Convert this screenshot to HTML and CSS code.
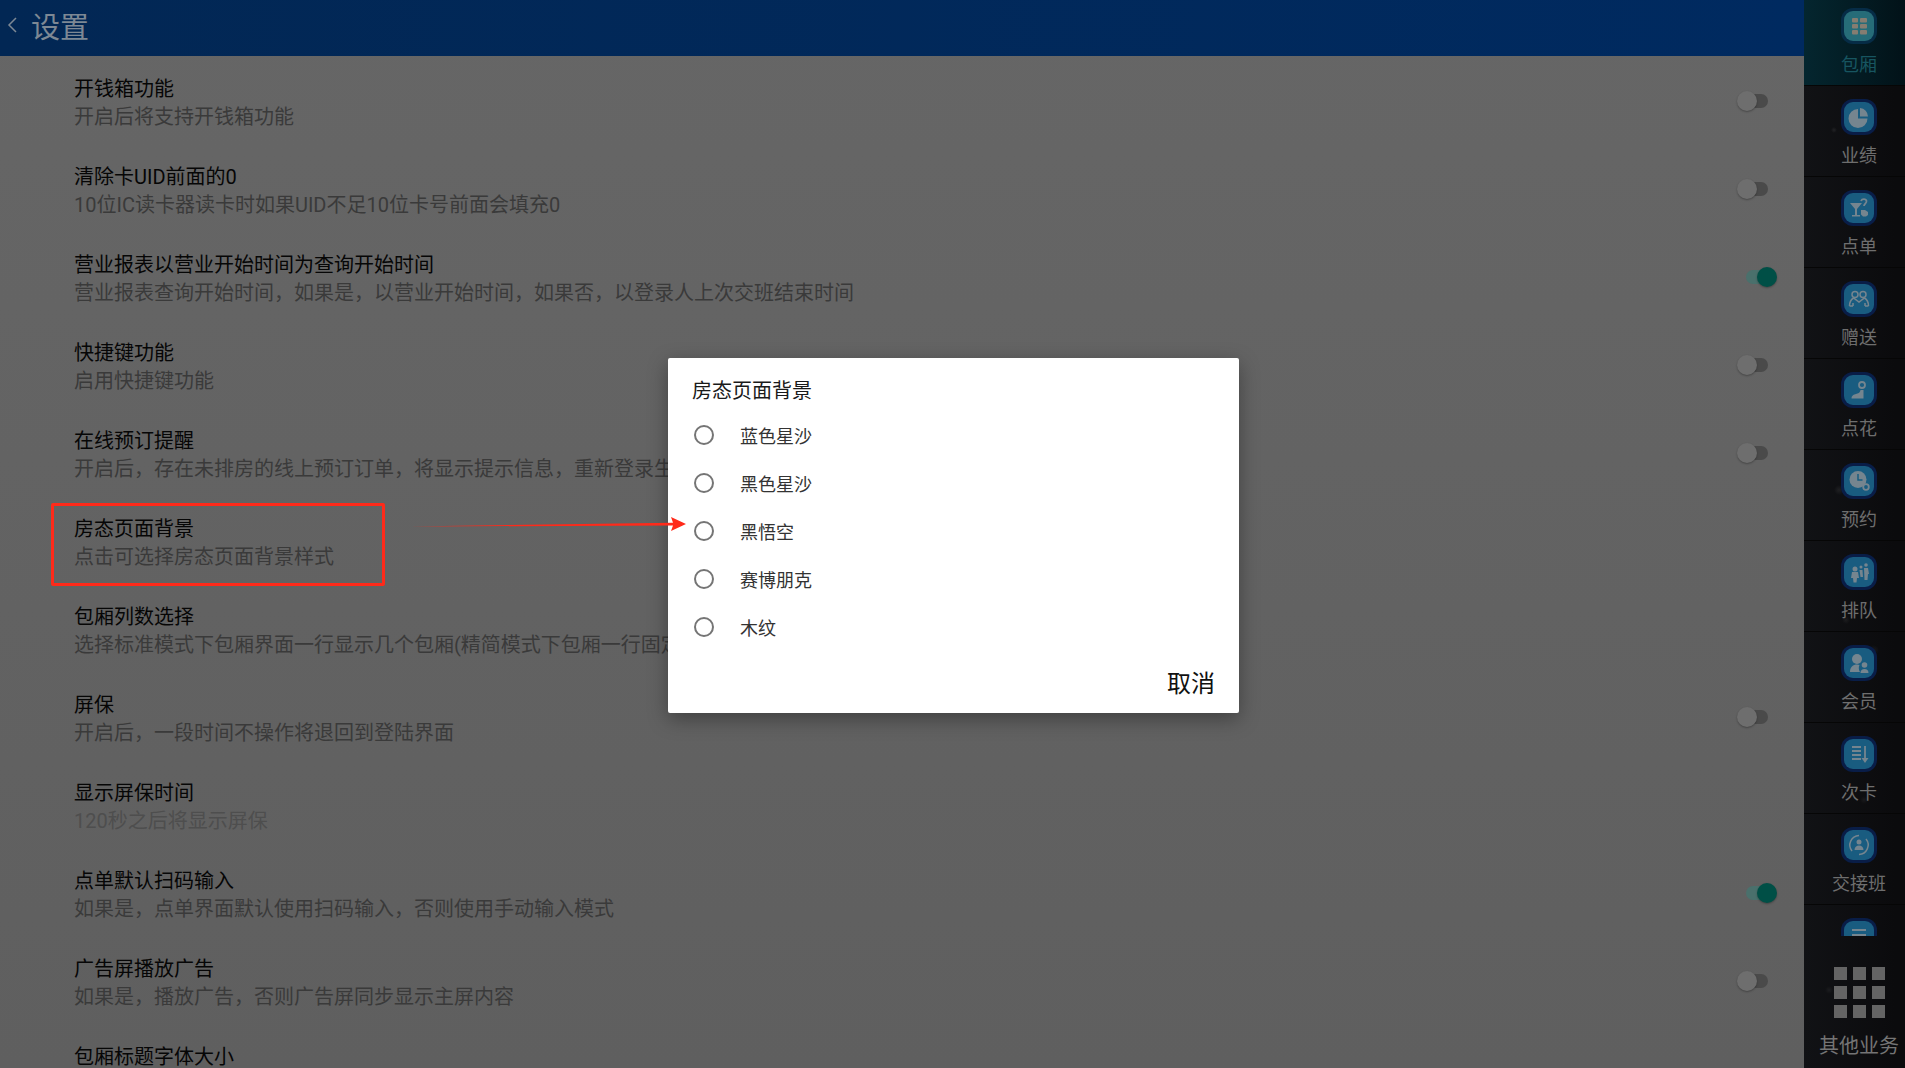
FILE: index.html
```html
<!DOCTYPE html>
<html lang="zh-CN">
<head>
    <meta charset="UTF-8">
    <title>设置</title>
    <link rel="stylesheet" href="styles.css">
</head>
<body>
    <div class="app">
        <main class="settings">
            <header class="header">
                <svg class="back-icon" viewBox="0 0 10 16"><path d="M9 1L2 8l7 7"/></svg>
                <div class="header-title">设置</div>
            </header>
            <div class="setting-list">
                <div class="setting-row">
                    <div class="setting-text">
                        <div class="setting-title">开钱箱功能</div>
                        <div class="setting-desc">开启后将支持开钱箱功能</div>
                    </div>
                    <div class="switch"></div>
                </div>
                <div class="setting-row">
                    <div class="setting-text">
                        <div class="setting-title">清除卡UID前面的0</div>
                        <div class="setting-desc">10位IC读卡器读卡时如果UID不足10位卡号前面会填充0</div>
                    </div>
                    <div class="switch"></div>
                </div>
                <div class="setting-row">
                    <div class="setting-text">
                        <div class="setting-title">营业报表以营业开始时间为查询开始时间</div>
                        <div class="setting-desc">营业报表查询开始时间，如果是，以营业开始时间，如果否，以登录人上次交班结束时间</div>
                    </div>
                    <div class="switch on"></div>
                </div>
                <div class="setting-row">
                    <div class="setting-text">
                        <div class="setting-title">快捷键功能</div>
                        <div class="setting-desc">启用快捷键功能</div>
                    </div>
                    <div class="switch"></div>
                </div>
                <div class="setting-row">
                    <div class="setting-text">
                        <div class="setting-title">在线预订提醒</div>
                        <div class="setting-desc">开启后，存在未排房的线上预订订单，将显示提示信息，重新登录生效</div>
                    </div>
                    <div class="switch"></div>
                </div>
                <div class="setting-row">
                    <div class="setting-text">
                        <div class="setting-title">房态页面背景</div>
                        <div class="setting-desc">点击可选择房态页面背景样式</div>
                    </div>
                </div>
                <div class="setting-row">
                    <div class="setting-text">
                        <div class="setting-title">包厢列数选择</div>
                        <div class="setting-desc">选择标准模式下包厢界面一行显示几个包厢(精简模式下包厢一行固定显示)</div>
                    </div>
                </div>
                <div class="setting-row">
                    <div class="setting-text">
                        <div class="setting-title">屏保</div>
                        <div class="setting-desc">开启后，一段时间不操作将退回到登陆界面</div>
                    </div>
                    <div class="switch"></div>
                </div>
                <div class="setting-row">
                    <div class="setting-text">
                        <div class="setting-title">显示屏保时间</div>
                        <div class="setting-desc disabled">120秒之后将显示屏保</div>
                    </div>
                </div>
                <div class="setting-row">
                    <div class="setting-text">
                        <div class="setting-title">点单默认扫码输入</div>
                        <div class="setting-desc">如果是，点单界面默认使用扫码输入，否则使用手动输入模式</div>
                    </div>
                    <div class="switch on"></div>
                </div>
                <div class="setting-row">
                    <div class="setting-text">
                        <div class="setting-title">广告屏播放广告</div>
                        <div class="setting-desc">如果是，播放广告，否则广告屏同步显示主屏内容</div>
                    </div>
                    <div class="switch"></div>
                </div>
                <div class="setting-row">
                    <div class="setting-text">
                        <div class="setting-title">包厢标题字体大小</div>
                    </div>
                </div>
            </div>
        </main>

        <nav class="sidebar">
            <div class="nav-scroll">
                <div class="nav-list">
                    <a href="#" class="nav-item active">
                        <span class="nav-icon">
                            <svg viewBox="0 0 30 30"><g class="tan"><rect x="8" y="7" width="6" height="4.500" rx="1"/><rect x="16" y="7" width="7" height="4.500" rx="1"/><rect x="8" y="13" width="6" height="4.500" rx="1"/><rect x="16" y="13" width="7" height="4.500" rx="1"/><rect x="8" y="19" width="6" height="4.500" rx="1"/><rect x="16" y="19" width="7" height="4.500" rx="1"/></g></svg>
                        </span>
                        包厢
                    </a>
                    <a href="#" class="nav-item">
                        <span class="nav-icon">
                            <svg viewBox="0 0 30 30"><g class="solid"><path d="M14 7v9.500h9.500A9.500 9.500 0 1 1 14 7z"/><path d="M16 6a8.500 8.500 0 0 1 8 8.500h-8z"/></g></svg>
                        </span>
                        业绩
                    </a>
                    <a href="#" class="nav-item">
                        <span class="nav-icon">
                            <svg viewBox="0 0 30 30"><path class="solid" d="M6 10h12l-5 6v6h3v1.500H8V22h3v-6z"/><path class="line" d="M17 8c1-2.500 5-2.500 5.500 0 .4 2-2.500 3-2.500 5"/><path class="solid" d="M17 17h4l3 2v3l-2 1.500h-3l-2-2z"/></svg>
                        </span>
                        点单
                    </a>
                    <a href="#" class="nav-item">
                        <span class="nav-icon">
                            <svg viewBox="0 0 30 30"><g class="line thin"><circle cx="11" cy="10.500" r="3"/><circle cx="19" cy="10.500" r="3"/><path d="M5.500 22c0-3 1.500-6.500 4-8l5.500 4 5.500-4c2.500 1.500 4 5 4 8"/><path d="M9 19v3M21 19v3M5.500 22H9M21 22h3.500"/></g></svg>
                        </span>
                        赠送
                    </a>
                    <a href="#" class="nav-item">
                        <span class="nav-icon">
                            <svg viewBox="0 0 30 30"><circle class="line" cx="18" cy="10" r="3"/><path class="solid" d="M16.500 15h3v8.500H7.500c0-3 2.500-4 4.500-4.500s4-1 4.500-4z"/></svg>
                        </span>
                        点花
                    </a>
                    <a href="#" class="nav-item">
                        <span class="nav-icon">
                            <svg viewBox="0 0 30 30"><circle class="solid" cx="14" cy="13.500" r="8.500"/><path class="cut" d="M14 8v6h4.500"/><circle class="line" cx="22" cy="21" r="2.800"/></svg>
                        </span>
                        预约
                    </a>
                    <a href="#" class="nav-item">
                        <span class="nav-icon">
                            <svg viewBox="0 0 30 30"><g class="solid"><circle cx="11" cy="12" r="2.500"/><path d="M8 15h6l1 6h-2l-.5 4.500h-3L9 21H7z"/><circle cx="17" cy="10" r="1.500"/><circle cx="22" cy="8" r="1.800"/><path d="M15.500 13h3l.5 7h-2.500zM20 11h4l1 6h-1l-.5 6h-3z"/></g></svg>
                        </span>
                        排队
                    </a>
                    <a href="#" class="nav-item">
                        <span class="nav-icon">
                            <svg viewBox="0 0 30 30"><g class="solid"><circle cx="13" cy="11" r="5"/><path d="M6 24c0-5 3-7.500 7-7.500 1 0 2 .2 2.500.5-1 1.500-1 5 .5 7z"/><circle cx="20.500" cy="17" r="2.800"/><path d="M16.500 25c0-2.500 1.500-4 4-4s4 1.500 4 4z"/></g></svg>
                        </span>
                        会员
                    </a>
                    <a href="#" class="nav-item">
                        <span class="nav-icon">
                            <svg viewBox="0 0 30 30"><g class="line"><path d="M8 8h9M8 12h9M8 16h9M8 20h9M21 7v15"/></g><path class="solid" d="M17.500 19h7L21 24z"/></svg>
                        </span>
                        次卡
                    </a>
                    <a href="#" class="nav-item">
                        <span class="nav-icon">
                            <svg viewBox="0 0 30 30"><g class="line thin"><path d="M8 21a9.500 9.500 0 0 1 7-15.500"/><path d="M22 9a9.500 9.500 0 0 1-7 15.500"/></g><g class="solid"><circle cx="15" cy="12" r="2.500"/><path d="M10.500 20c0-3 2-4.500 4.500-4.500s4.500 1.500 4.500 4.500z"/></g></svg>
                        </span>
                        交接班
                    </a>
                    <a href="#" class="nav-item">
                        <span class="nav-icon">
                            <svg viewBox="0 0 30 30"><g class="line"><path d="M8 9h14M8 14h14M8 19h14"/></g></svg>
                        </span>
                    </a>
                </div>
            </div>
            <a href="#" class="nav-other">
                <span class="other-grid">
                    <i></i><i></i><i></i><i></i><i></i><i></i><i></i><i></i><i></i>
                </span>
                其他业务
            </a>
        </nav>

        <div class="dialog-layer">
            <div class="dialog">
                <div class="dialog-title">房态页面背景</div>
                <ul class="option-list">
                    <li class="option"><span class="radio"></span>蓝色星沙</li>
                    <li class="option"><span class="radio"></span>黑色星沙</li>
                    <li class="option"><span class="radio"></span>黑悟空</li>
                    <li class="option"><span class="radio"></span>赛博朋克</li>
                    <li class="option"><span class="radio"></span>木纹</li>
                </ul>
                <div class="dialog-actions">
                    <button class="cancel-btn">取消</button>
                </div>
            </div>
        </div>

        <!-- red marks drawn over the screenshot -->
        <div class="mark-box"></div>
        <svg class="mark-arrow" viewBox="0 0 276 14"><path d="M0 9.500L263 5.800 261 0l15 7-15 7 2-5.500z"/></svg>
    </div>
</body>
</html>
```

FILE: styles.css
```css
* {
    margin: 0;
    padding: 0;
    box-sizing: border-box;
}

body {
    font-family: Roboto, "Noto Sans CJK SC", sans-serif;
    background: #666;
    overflow: hidden;
}

a {
    text-decoration: none;
}

.app {
    position: relative;
    display: flex;
    width: 1905px;
    height: 1068px;
    overflow: hidden;
}

.settings {
    flex: none;
    width: 1804px;
    height: 1068px;
    overflow: hidden;
    background: linear-gradient(#666, #5f5f5f);
}

.header {
    display: flex;
    align-items: center;
    height: 56px;
    padding-left: 7px;
    gap: 14px;
    background: linear-gradient(90deg, #022754, #002a60);
}

.back-icon {
    width: 10px;
    height: 16px;
    margin-top: -6px;
    fill: none;
    stroke: #7d8894;
    stroke-width: 1.5;
}

.header-title {
    font-size: 29px;
    line-height: 56px;
    color: #7d8894;
}

.setting-row {
    display: flex;
    justify-content: space-between;
    height: 88px;
    padding: 19px 27px 0 74px;
}

.setting-title {
    font-size: 20px;
    line-height: 28px;
    color: #060606;
}

.setting-desc {
    font-size: 20px;
    line-height: 29px;
    color: #3a3a3a;
    white-space: nowrap;
}

.setting-desc.disabled {
    color: #4e4e4e;
}

.switch {
    position: relative;
    flex: none;
    width: 40px;
    height: 20px;
    margin-top: 16px;
}

.switch::before {
    content: "";
    position: absolute;
    top: 3px;
    left: 9px;
    width: 22px;
    height: 14px;
    border-radius: 7px;
    background: #4a4a4a;
}

.switch::after {
    content: "";
    position: absolute;
    top: 0;
    left: 0;
    width: 20px;
    height: 20px;
    border-radius: 50%;
    background: #6e6e6e;
    box-shadow: 0 1px 2px rgba(0, 0, 0, 0.3);
}

.switch.on::before {
    background: #4a706c;
}

.switch.on::after {
    left: 20px;
    background: #004f46;
}

.sidebar {
    flex: none;
    display: flex;
    flex-direction: column;
    width: 101px;
    height: 1068px;
    background:
        radial-gradient(circle at 30px 130px, rgba(255, 255, 255, 0.08) 0, transparent 3px),
        radial-gradient(circle at 35px 490px, rgba(255, 255, 255, 0.07) 0, transparent 5px),
        radial-gradient(circle at 42px 620px, rgba(255, 255, 255, 0.06) 0, transparent 4px),
        radial-gradient(circle at 70px 650px, rgba(255, 255, 255, 0.05) 0, transparent 5px),
        radial-gradient(circle at 60px 800px, rgba(255, 255, 255, 0.05) 0, transparent 4px),
        radial-gradient(circle at 25px 990px, rgba(255, 255, 255, 0.05) 0, transparent 4px),
        linear-gradient(90deg, #111215, #0b0b0d 90%);
}

.nav-scroll {
    height: 936px;
    overflow: hidden;
}

.nav-list {
    margin-top: -5px;
}

.nav-item {
    display: flex;
    flex-direction: column;
    align-items: center;
    height: 91px;
    padding: 16px 0 0 9px;
    font-size: 18px;
    line-height: 26px;
    color: #6e6e6e;
    border-bottom: 1px solid #060606;
}

.nav-item.active {
    color: #175560;
    background: linear-gradient(90deg, #04262f, #021218);
}

.nav-icon {
    display: block;
    width: 30px;
    height: 30px;
    margin-bottom: 11px;
    border-radius: 9px;
    background: #195c80;
    box-shadow: 0 0 0 3px #091d47;
    filter: blur(0.5px);
}

.nav-icon svg {
    display: block;
    width: 30px;
    height: 30px;
}

.nav-icon .solid {
    fill: #75858f;
}

.nav-icon .line {
    fill: none;
    stroke: #75858f;
    stroke-width: 1.8;
}

.nav-icon .line.thin {
    stroke-width: 1.5;
}

.nav-icon .cut {
    fill: none;
    stroke: #195c80;
    stroke-width: 1.5;
}

.nav-icon .tan {
    fill: #857d71;
}

.nav-item.active .nav-icon {
    background: #266c78;
    box-shadow: 0 0 0 3px #062c46;
}

.nav-other {
    display: flex;
    flex-direction: column;
    align-items: center;
    padding: 31px 0 0 9px;
    font-size: 20px;
    line-height: 28px;
    color: #747474;
}

.other-grid {
    display: grid;
    grid-template-columns: repeat(3, 13px);
    grid-auto-rows: 13px;
    gap: 6px;
    margin-bottom: 14px;
}

.other-grid i {
    background: #646464;
}

.dialog-layer {
    position: absolute;
    inset: 0;
    display: flex;
    align-items: center;
    justify-content: center;
    padding: 3px 0 0 2px;
}

.dialog {
    width: 571px;
    height: 355px;
    padding: 19px 24px 0;
    background: #fff;
    border-radius: 2px;
    box-shadow: 0 6px 20px rgba(0, 0, 0, 0.35);
}

.dialog-title {
    font-size: 20px;
    line-height: 28px;
    color: #1a1a1a;
}

.option-list {
    list-style: none;
    margin-top: 6px;
}

.option {
    display: flex;
    align-items: center;
    height: 48px;
    padding-left: 2px;
    font-size: 18px;
    color: #333;
}

.radio {
    flex: none;
    width: 20px;
    height: 20px;
    margin-right: 26px;
    border: 2px solid #757575;
    border-radius: 50%;
}

.dialog-actions {
    display: flex;
    justify-content: flex-end;
    margin-top: 17px;
}

.cancel-btn {
    border: none;
    background: none;
    font-family: inherit;
    font-size: 24px;
    line-height: 32px;
    color: #111;
}

.mark-box {
    position: absolute;
    left: 51px;
    top: 503px;
    width: 334px;
    height: 83px;
    border: 3px solid #ff2a1a;
    border-radius: 2px;
}

.mark-arrow {
    position: absolute;
    left: 410px;
    top: 517px;
    width: 276px;
    height: 14px;
    fill: #ff2a1a;
}
```
